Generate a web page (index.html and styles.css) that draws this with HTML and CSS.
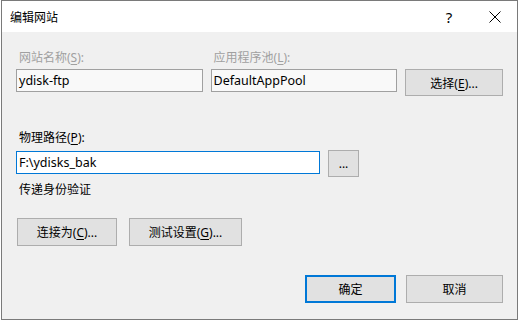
FILE: index.html
```html
<!DOCTYPE html>
<html lang="zh-CN">
<head>
<meta charset="utf-8">
<title>编辑网站</title>
<link rel="stylesheet" href="styles.css">
</head>
<body>
<div class="window">
  <div class="titlebar">
    <span class="title">编辑网站</span>
    <span class="help">?</span>
    <span class="close">
      <svg width="12" height="12" viewBox="0 0 12 12"><path d="M0.5 0.5 L11.5 11.5 M11.5 0.5 L0.5 11.5" stroke="#000" stroke-width="1" fill="none"/></svg>
    </span>
  </div>
  <div class="content">
    <div class="row-top">
      <div class="field site">
        <div class="label disabled">网站名称(<u>S</u>):</div>
        <div class="input readonly">ydisk-ftp</div>
      </div>
      <div class="field pool">
        <div class="label disabled">应用程序池(<u>L</u>):</div>
        <div class="input readonly">DefaultAppPool</div>
      </div>
      <button class="btn select">选择(<u>E</u>)...</button>
    </div>

    <div class="label path-label">物理路径(<u>P</u>):</div>
    <div class="row-path">
      <div class="input focused">F:\ydisks_bak</div>
      <button class="btn browse">...</button>
    </div>

    <div class="label auth-label">传递身份验证</div>
    <div class="row-auth">
      <button class="btn connect">连接为(<u>C</u>)...</button>
      <button class="btn test">测试设置(<u>G</u>)...</button>
    </div>

    <div class="footer">
      <button class="btn ok">确定</button>
      <button class="btn cancel">取消</button>
    </div>
  </div>
</div>
</body>
</html>
```

FILE: styles.css
```css
html, body {
  margin: 0;
  padding: 0;
  background: #ffffff;
}

body {
  font-family: "Noto Sans", "Noto Sans CJK SC", sans-serif;
  font-size: 12px;
  color: #000;
}

.window {
  margin-left: 1px;
  width: 517px;
  height: 320px;
  box-sizing: border-box;
  border: 1px solid #7a7a7a;
  background: #f0f0f0;
  display: flex;
  flex-direction: column;
}

.titlebar {
  height: 31px;
  background: #ffffff;
  display: flex;
  align-items: center;
  padding-left: 8px;
  font-family: "Noto Sans CJK SC", sans-serif;
  font-size: 12px;
}

.title {
  flex: 1;
  line-height: 16px;
}

.help {
  width: 16px;
  text-align: center;
  font-family: "Noto Sans", sans-serif;
  font-size: 15px;
  line-height: 16px;
  margin-right: 32px;
}

.close {
  display: flex;
  margin-right: 16px;
}

.content {
  flex: 1;
  padding: 18px 14px 0 14px;
  display: flex;
  flex-direction: column;
}

.label {
  line-height: 16px;
  padding-left: 3px;
  font-family: "Noto Sans", "Noto Sans CJK SC", sans-serif;
}

.label u, .btn u {
  text-decoration-thickness: 1px;
  text-underline-offset: 2px;
}

.disabled {
  color: #a0a0a0;
}

.row-top {
  display: flex;
  align-items: flex-start;
  gap: 8px;
}

.field {
  display: flex;
  flex-direction: column;
  gap: 3px;
}

.site { width: 187px; }
.pool { width: 187px; }

.input {
  height: 23px;
  box-sizing: border-box;
  border: 1px solid #a0a0a0;
  background: #ffffff;
  padding: 0 2px;
  line-height: 21px;
  font-size: 12.5px;
  white-space: nowrap;
  overflow: hidden;
}

.input.readonly {
  background: #f9f9f9;
}

.input.focused {
  border-color: #0078d7;
  width: 304px;
}

.btn {
  font-family: "Noto Sans", "Noto Sans CJK SC", sans-serif;
  font-size: 12px;
  color: #000;
  background: #e1e1e1;
  border: 1px solid #adadad;
  box-sizing: border-box;
  padding: 0;
  margin: 0;
  height: 28px;
}

.select {
  width: 98px;
  height: 27px;
  margin-top: 19px;
}

.path-label {
  margin-top: 34px;
}

.row-path {
  display: flex;
  align-items: flex-start;
  gap: 8px;
  margin-top: 4px;
}

.row-path .input {
  margin-top: 1px;
}

.browse {
  width: 31px;
  height: 27px;
}

.auth-label {
  margin-top: 5px;
}

.row-auth {
  display: flex;
  gap: 12px;
  margin-top: 20px;
  padding-left: 1px;
}

.connect { width: 100px; }
.test { width: 113px; }

.footer {
  display: flex;
  justify-content: flex-end;
  gap: 10px;
  margin-top: 29px;
}

.ok {
  width: 91px;
  border: 2px solid #0078d7;
}

.cancel {
  width: 97px;
}
```
